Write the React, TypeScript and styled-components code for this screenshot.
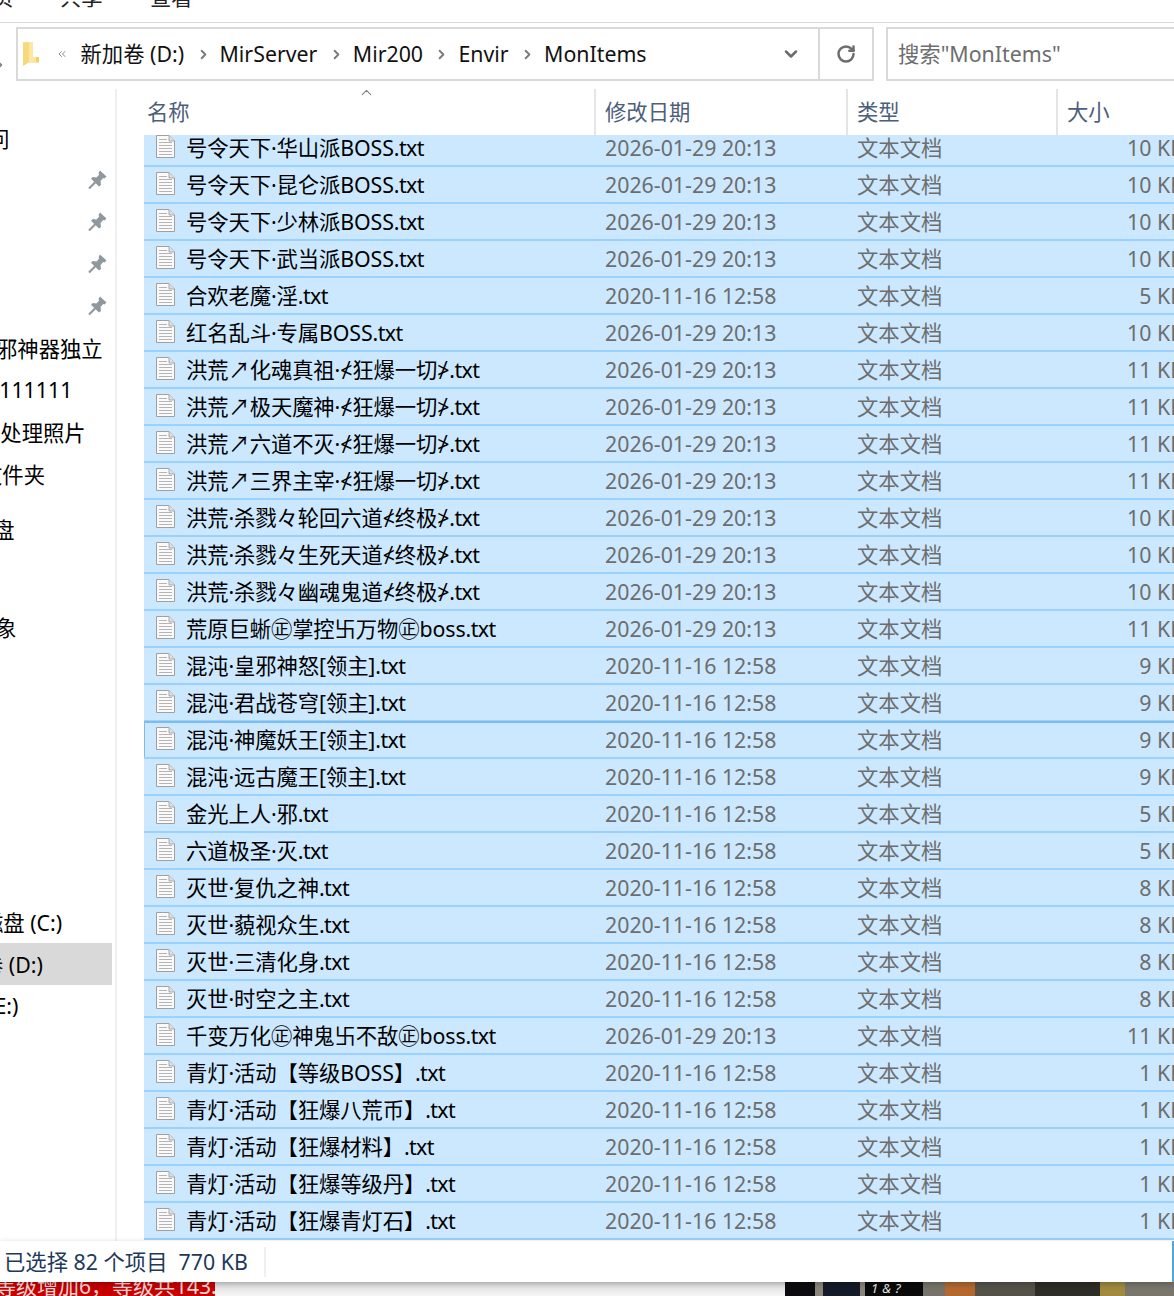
import { createGlobalStyle, styled } from "styled-components";
import { ChevronDown, ChevronRight, ChevronUp, ChevronsLeft, RotateCw } from "lucide-react";

const NEW_DATE = "2026-01-29 20:13";
const OLD_DATE = "2020-11-16 12:58";
const FOCUSED = "混沌·神魔妖王[领主]";

const files: [string, string, string][] = [
  ["号令天下·华山派BOSS", NEW_DATE, "10 KB"],
  ["号令天下·昆仑派BOSS", NEW_DATE, "10 KB"],
  ["号令天下·少林派BOSS", NEW_DATE, "10 KB"],
  ["号令天下·武当派BOSS", NEW_DATE, "10 KB"],
  ["合欢老魔·淫", OLD_DATE, "5 KB"],
  ["红名乱斗·专属BOSS", NEW_DATE, "10 KB"],
  ["洪荒↗化魂真祖·≮狂爆一切≯", NEW_DATE, "11 KB"],
  ["洪荒↗极天魔神·≮狂爆一切≯", NEW_DATE, "11 KB"],
  ["洪荒↗六道不灭·≮狂爆一切≯", NEW_DATE, "11 KB"],
  ["洪荒↗三界主宰·≮狂爆一切≯", NEW_DATE, "11 KB"],
  ["洪荒·杀戮々轮回六道≮终极≯", NEW_DATE, "10 KB"],
  ["洪荒·杀戮々生死天道≮终极≯", NEW_DATE, "10 KB"],
  ["洪荒·杀戮々幽魂鬼道≮终极≯", NEW_DATE, "10 KB"],
  ["荒原巨蜥㊣掌控卐万物㊣boss", NEW_DATE, "11 KB"],
  ["混沌·皇邪神怒[领主]", OLD_DATE, "9 KB"],
  ["混沌·君战苍穹[领主]", OLD_DATE, "9 KB"],
  [FOCUSED, OLD_DATE, "9 KB"],
  ["混沌·远古魔王[领主]", OLD_DATE, "9 KB"],
  ["金光上人·邪", OLD_DATE, "5 KB"],
  ["六道极圣·灭", OLD_DATE, "5 KB"],
  ["灭世·复仇之神", OLD_DATE, "8 KB"],
  ["灭世·藐视众生", OLD_DATE, "8 KB"],
  ["灭世·三清化身", OLD_DATE, "8 KB"],
  ["灭世·时空之主", OLD_DATE, "8 KB"],
  ["千变万化㊣神鬼卐不敌㊣boss", NEW_DATE, "11 KB"],
  ["青灯·活动【等级BOSS】", OLD_DATE, "1 KB"],
  ["青灯·活动【狂爆八荒币】", OLD_DATE, "1 KB"],
  ["青灯·活动【狂爆材料】", OLD_DATE, "1 KB"],
  ["青灯·活动【狂爆等级丹】", OLD_DATE, "1 KB"],
  ["青灯·活动【狂爆青灯石】", OLD_DATE, "1 KB"],
];

const crumbs = ["MirServer", "Mir200", "Envir", "MonItems"];

function DocIcon() {
  return (
    <svg width="21" height="25" viewBox="0 0 21 25">
      <path d="M1.5 1.5H14L19.5 7V23.5H1.5Z" fill="#fafafa" stroke="#a0a0a0" />
      <path d="M14 1.5V7H19.5" fill="#dedede" stroke="#aaa" />
      <path
        d="M4 5.5H12M4 8.5H17M4 11.5H17M4 14.5H17M4 17.5H17M4 20.5H17"
        stroke="#b4b4b4"
        strokeWidth="1"
      />
    </svg>
  );
}

function PinIcon() {
  return (
    <svg width="19" height="20" viewBox="0 0 19 20">
      <path d="M12 0.5L18.5 6.5L16.5 8.5L15.2 8L12.5 11L13 15L11 16.5L3 8.8L4.8 7L8.5 7.6L11.2 4.6L10.5 3Z" fill="#8f989f" />
      <path d="M7.5 12L1 18.5" stroke="#8f989f" strokeWidth="2.2" />
    </svg>
  );
}

function FolderIcon() {
  return (
    <svg width="18" height="26" viewBox="0 0 18 26">
      <path d="M1 1.5H11V16H17V21.5H6L1 25Z" fill="#f3cf68" />
      <path d="M6.5 1.5H11V16H14V21.5H6.5Z" fill="#fbe7a1" />
      <path d="M1 1.5H6.5V21.5L1 25Z" fill="#f7d97c" />
    </svg>
  );
}

export default function App() {
  return (
    <>
      <GlobalStyle />
      <Page>
        <MenuStrip>
          <MenuItem $width={68}>页</MenuItem>
          <MenuItem $width={90}>共享</MenuItem>
          <MenuItem $width={60}>查看</MenuItem>
        </MenuStrip>

        <NavBar>
          <BackChevron>
            <ChevronRight size={12} strokeWidth={3} />
          </BackChevron>
          <AddressBox>
            <FolderSlot>
              <FolderIcon />
            </FolderSlot>
            <ChevronsLeft size={12} color="#8a8a8a" />
            <RootCrumb>新加卷 (D:)</RootCrumb>
            {crumbs.map((crumb) => (
              <CrumbGroup key={crumb}>
                <ChevronRight size={15} strokeWidth={3} color="#7a7a7a" />
                <Crumb>{crumb}</Crumb>
              </CrumbGroup>
            ))}
            <DropSlot>
              <ChevronDown size={20} strokeWidth={3} color="#6d6d6d" />
            </DropSlot>
            <RefreshSlot>
              <RotateCw size={20} strokeWidth={3} color="#6d6d6d" />
            </RefreshSlot>
          </AddressBox>
          <SearchBox>搜索"MonItems"</SearchBox>
        </NavBar>

        <Content>
          <Sidebar>
            <NavItem $shift={-33}>访问</NavItem>
            <PinItem><PinIcon /></PinItem>
            <PinItem><PinIcon /></PinItem>
            <PinItem><PinIcon /></PinItem>
            <PinItem><PinIcon /></PinItem>
            <NavItem $shift={-4}>邪神器独立</NavItem>
            <NavItem $shift={-13}>1111111</NavItem>
            <NavItem $shift={-21}>待处理照片</NavItem>
            <NavItem $shift={-19}>文件夹</NavItem>
            <NavItem $shift={-28} $gap={13}>网盘</NavItem>
            <NavItem $shift={-26} $gap={56}>对象</NavItem>
            <NavItem $shift={-18} $gap={253}>磁盘 (C:)</NavItem>
            <NavItem $shift={-18} $active>卷 (D:)</NavItem>
            <NavItem $shift={-12}>(E:)</NavItem>
          </Sidebar>

          <ListPane>
            <HeaderRow>
              <SortCaret>
                <ChevronUp size={17} strokeWidth={1.5} color="#808080" />
              </SortCaret>
              <HeaderCell>名称</HeaderCell>
              <HeaderCell $divider>修改日期</HeaderCell>
              <HeaderCell $divider>类型</HeaderCell>
              <HeaderCell $divider>大小</HeaderCell>
            </HeaderRow>
            <Rows>
              {files.map(([name, date, size]) => (
                <Row key={name} $focused={name === FOCUSED}>
                  <NameCell>
                    <DocIcon />
                    <FileName>
                      {name}
                      <Extension>.txt</Extension>
                    </FileName>
                  </NameCell>
                  <DateCell>{date}</DateCell>
                  <TypeCell>文本文档</TypeCell>
                  <SizeCell>{size}</SizeCell>
                </Row>
              ))}
            </Rows>
          </ListPane>
        </Content>

        <StatusBar>
          <StatusText>已选择 82 个项目&nbsp;&nbsp;770 KB</StatusText>
          <ViewToggle />
        </StatusBar>

        <Desktop>
          <RedNotice>等级增加6，等级共143.</RedNotice>
          <GameArt>
            <GameGlyphs>1&amp;?</GameGlyphs>
          </GameArt>
        </Desktop>
      </Page>
    </>
  );
}

const GlobalStyle = createGlobalStyle`
  html, body {
    margin: 0;
    background: #fff;
  }
  body {
    font-family: "Noto Sans", "Noto Sans CJK SC", sans-serif;
    font-size: 21.33px;
    color: #000;
  }
`;

const Page = styled.div`
  width: 1174px;
  height: 1296px;
  overflow: hidden;
  display: flex;
  flex-direction: column;
`;

const MenuStrip = styled.div`
  height: 22px;
  flex: none;
  display: flex;
  align-items: flex-end;
  overflow: hidden;
  border-bottom: 1px solid #dadada;
`;

const MenuItem = styled.div<{ $width: number }>`
  width: ${(p) => p.$width}px;
  flex: none;
  line-height: 30px;
  height: 30px;
  margin-bottom: 10px;
  color: #222;
  &:first-child {
    margin-left: -8px;
  }
`;

const NavBar = styled.div`
  height: 54px;
  margin-top: 4px;
  flex: none;
  display: flex;
  gap: 12px;
  position: relative;
`;

const BackChevron = styled.div`
  position: absolute;
  left: -6px;
  top: 21px;
  color: #777;
`;

const AddressBox = styled.div`
  margin-left: 16px;
  width: 858px;
  box-sizing: border-box;
  flex: none;
  display: flex;
  align-items: center;
  border: 2px solid #d9d9d9;
`;

const FolderSlot = styled.div`
  width: 38px;
  padding-left: 4px;
  box-sizing: border-box;
  display: flex;
`;

const CrumbGroup = styled.div`
  display: flex;
  align-items: center;
  gap: 9px;
  margin-left: 11.4px;
`;

const Crumb = styled.span`
  color: #111;
  line-height: 30px;
  white-space: nowrap;
`;

const RootCrumb = styled(Crumb)`
  margin-left: 12.5px;
`;

const DropSlot = styled.div`
  margin-left: auto;
  width: 54px;
  display: flex;
  justify-content: center;
`;

const RefreshSlot = styled.div`
  width: 54px;
  height: 100%;
  box-sizing: border-box;
  display: flex;
  align-items: center;
  justify-content: center;
  border-left: 2px solid #d9d9d9;
`;

const SearchBox = styled.div`
  flex: 1;
  display: flex;
  align-items: center;
  padding: 0 0 3px 10px;
  border: 2px solid #d9d9d9;
  border-right: 0;
  color: #6d6d6d;
  white-space: nowrap;
`;

const Content = styled.div`
  flex: none;
  height: 1160px;
  display: flex;
`;

const Sidebar = styled.div`
  width: 117px;
  flex: none;
  box-sizing: border-box;
  margin-top: 8px;
  padding-top: 28px;
  border-right: 2px solid #f0f0f0;
  overflow: hidden;
`;

const NavItem = styled.div<{ $shift: number; $gap?: number; $active?: boolean }>`
  height: 42px;
  width: 112px;
  box-sizing: border-box;
  padding-bottom: 2px;
  display: flex;
  align-items: center;
  white-space: nowrap;
  overflow: hidden;
  margin-top: ${(p) => p.$gap ?? 0}px;
  background: ${(p) => (p.$active ? "#d9d9d9" : "transparent")};
  text-indent: ${(p) => p.$shift}px;
`;

const PinItem = styled.div`
  height: 42px;
  width: 107px;
  display: flex;
  align-items: center;
  justify-content: flex-end;
`;

const ListPane = styled.div`
  flex: 1;
  min-width: 0;
  padding-left: 27px;
  display: flex;
  flex-direction: column;
  overflow: hidden;
`;

const HeaderRow = styled.div`
  height: 46px;
  margin-top: 8px;
  flex: none;
  position: relative;
  display: grid;
  grid-template-columns: 450px 252px 210px 134px;
  z-index: 1;
  background: #fff;
`;

const SortCaret = styled.div`
  position: absolute;
  left: 214px;
  top: -5px;
  height: 14px;
  line-height: 0;
`;

const HeaderCell = styled.div<{ $divider?: boolean }>`
  display: flex;
  align-items: center;
  padding-left: ${(p) => (p.$divider ? 9 : 3)}px;
  padding-bottom: 3px;
  color: #4c607a;
  border-left: ${(p) => (p.$divider ? "2px solid #e5e5e5" : "0")};
`;

const Rows = styled.div`
  flex: 1;
  min-height: 0;
  overflow: hidden;
`;

const Row = styled.div<{ $focused?: boolean }>`
  height: 37px;
  box-sizing: border-box;
  display: grid;
  grid-template-columns: 450px 252px 210px 134px;
  align-items: center;
  background: #cce8ff;
  border-bottom: 2px solid #99d1ff;
  box-shadow: ${(p) => (p.$focused ? "inset 1px 1px 0 #7dbdee, 0 -1px 0 #7dbdee" : "none")};
  &:first-child {
    margin-top: -5px;
  }
`;

const NameCell = styled.div`
  display: flex;
  align-items: center;
  gap: 10px;
  padding: 0 0 2px 11px;
  white-space: nowrap;
  color: #000;
`;

const FileName = styled.span`
  letter-spacing: -0.1px;
`;

const Extension = styled.span`
  letter-spacing: -0.6px;
`;

const DateCell = styled.div`
  padding-left: 11px;
  color: #6d6d6d;
`;

const TypeCell = styled.div`
  padding: 0 0 2px 11px;
  color: #6d6d6d;
`;

const SizeCell = styled.div`
  text-align: right;
  padding-right: 6px;
  color: #6d6d6d;
  white-space: nowrap;
`;

const StatusBar = styled.div`
  height: 41px;
  flex: none;
  display: flex;
  align-items: center;
  justify-content: space-between;
  position: relative;
  z-index: 1;
  box-shadow: 0 2px 6px rgba(0, 0, 0, 0.25);
  background: #fff;
`;

const StatusText = styled.div`
  padding: 0 16px 0 4px;
  color: #1e395b;
  border-right: 2px solid #f0f0f0;
  line-height: 30px;
`;

const ViewToggle = styled.div`
  width: 2px;
  height: 100%;
  background: #52a8d8;
`;

const Desktop = styled.div`
  flex: 1;
  display: flex;
  min-height: 0;
  overflow: hidden;
  background: linear-gradient(#dcdcdc, #f6f6f6);
`;

const RedNotice = styled.div`
  width: 215px;
  height: 14px;
  flex: none;
  background: #c70000;
  color: #f4d6d6;
  font-size: 21px;
  line-height: 8px;
  text-indent: -5px;
  white-space: nowrap;
  overflow: hidden;
`;

const GameArt = styled.div`
  margin-left: 570px;
  flex: 1;
  position: relative;
  overflow: hidden;
  background: linear-gradient(
    90deg,
    #0c0c10 0 30px,
    #8a857a 30px 38px,
    #141a28 38px 75px,
    #8a857a 75px 80px,
    #0a0a0a 80px 138px,
    #77736a 138px 160px,
    #b3682f 160px 190px,
    #55524a 190px 250px,
    #2f2d28 250px 315px,
    #a08a40 315px 340px,
    #7a766c 340px
  );
`;

const GameGlyphs = styled.span`
  position: absolute;
  left: 86px;
  top: -2px;
  color: #e8e8e8;
  font-size: 13px;
  font-style: italic;
  letter-spacing: 4px;
  line-height: 16px;
`;
